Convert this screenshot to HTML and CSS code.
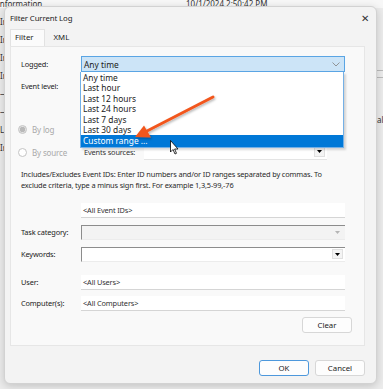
FILE: index.html
```html
<!DOCTYPE html>
<html lang="en">
<head>
    <meta charset="UTF-8">
    <meta name="viewport" content="width=device-width, initial-scale=1.0">
    <title>Filter Current Log</title>
    <link rel="stylesheet" href="styles.css">
</head>
<body>
    <div class="desktop">
        <!-- ventana del visor de eventos, detrás del diálogo -->
        <div class="behind">
            <div class="behind-top">
                <span class="bt-left">Information</span>
                <span class="bt-date">10/1/2024 2:50:42 PM</span>
            </div>
            <div class="behind-left">
                <span>In</span><span>In</span><span>In</span><span>In</span><span>—</span><span>—</span><span>Li</span><span>Ir</span>
            </div>
            <div class="behind-right">
                <span class="br-line"></span>
                <span class="br-line"></span>
                <span class="br-text">al</span>
            </div>
        </div>

        <div class="dialog">
            <div class="titlebar">
                <span class="title">Filter Current Log</span>
                <span class="close">&#x2715;</span>
            </div>

            <div class="tabs">
                <span class="tab active">Filter</span>
                <span class="tab">XML</span>
            </div>

            <div class="panel">
                <div class="row">
                    <label class="label">Logged:</label>
                    <div class="combo open">
                        <span>Any time</span>
                        <svg class="chev" width="8" height="5" viewBox="0 0 8 5"><path d="M0.5 0.5 L4 4 L7.5 0.5" fill="none" stroke="#8a8a8a" stroke-width="0.9"/></svg>
                    </div>
                </div>
                <div class="row level">
                    <label class="label">Event level:</label>
                </div>

                <div class="row radio-row log-row">
                    <span class="radio checked"></span>
                    <span class="radio-text">By log</span>
                </div>
                <div class="row radio-row source-row">
                    <span class="radio"></span>
                    <span class="radio-text">By source</span>
                    <span class="src-label">Events sources:</span>
                    <div class="src-field">
                        <span class="drop-btn"><svg width="5" height="3" viewBox="0 0 5 3"><path d="M0 0 H5 L2.5 3 Z" fill="#000"/></svg></span>
                    </div>
                </div>

                <p class="help">Includes/Excludes Event IDs: Enter ID numbers and/or ID ranges separated by commas. To exclude criteria, type a minus sign first. For example 1,3,5-99,-76</p>

                <div class="row ids-row">
                    <span class="label"></span>
                    <div class="field">&lt;All Event IDs&gt;</div>
                </div>
                <div class="row">
                    <label class="label">Task category:</label>
                    <div class="field sunken disabled">
                        <svg class="small-arrow" width="5" height="3" viewBox="0 0 5 3"><path d="M0 0 H5 L2.5 3 Z" fill="#b5b5b5"/></svg>
                    </div>
                </div>
                <div class="row">
                    <label class="label">Keywords:</label>
                    <div class="field sunken">
                        <span class="drop-btn kw"><svg width="5" height="3" viewBox="0 0 5 3"><path d="M0 0 H5 L2.5 3 Z" fill="#000"/></svg></span>
                    </div>
                </div>
                <div class="row user-row">
                    <label class="label">User:</label>
                    <div class="field">&lt;All Users&gt;</div>
                </div>
                <div class="row">
                    <label class="label">Computer(s):</label>
                    <div class="field">&lt;All Computers&gt;</div>
                </div>
                <div class="clear-row">
                    <button class="btn">Clear</button>
                </div>

                <!-- lista desplegable abierta -->
                <ul class="dropdown">
                    <li>Any time</li>
                    <li>Last hour</li>
                    <li>Last 12 hours</li>
                    <li>Last 24 hours</li>
                    <li>Last 7 days</li>
                    <li>Last 30 days</li>
                    <li class="selected">Custom range ...</li>
                </ul>
            </div>

            <div class="footer">
                <button class="btn primary">OK</button>
                <button class="btn">Cancel</button>
            </div>
        </div>

        <!-- flecha naranja y cursor -->
        <svg class="annotation" width="383" height="389" viewBox="0 0 383 389">
            <defs>
                <filter id="sh" x="-20%" y="-20%" width="140%" height="140%">
                    <feDropShadow dx="1" dy="1.5" stdDeviation="1" flood-color="#000" flood-opacity="0.3"/>
                </filter>
            </defs>
            <g filter="url(#sh)">
                <line x1="213" y1="97" x2="147" y2="131" stroke="#f2561d" stroke-width="3" stroke-linecap="round"/>
                <path d="M135 137 L144 125.5 L151 137.5 Z" fill="#f2561d"/>
            </g>
            <path d="M170.5 140.5 L170.5 152 L173 149.5 L175 154 L176.5 153.3 L174.6 149 L178 149 Z" fill="#fff" stroke="#000" stroke-width="0.8" stroke-linejoin="round"/>
        </svg>
    </div>
</body>
</html>
```

FILE: styles.css
```css
body {
    margin: 0;
    font-family: "Noto Sans", "Open Sans", sans-serif;
    background-color: #e9e9e9;
    color: #1b1b1b;
}
.desktop {
    position: relative;
    width: 383px;
    height: 389px;
    overflow: hidden;
    background-color: #ececec;
}
.behind {
    position: absolute;
    inset: 0;
    font-size: 8px;
    color: #333;
}
.behind-top {
    height: 8px;
    background: #f7f7f7;
    display: flex;
    align-items: flex-end;
    overflow: hidden;
    line-height: 8px;
}
.bt-left {
    margin-left: -3px;
    width: 189px;
}
.behind-left {
    position: absolute;
    left: 0;
    top: 18px;
    width: 5px;
    display: flex;
    flex-direction: column;
    gap: 10px;
    overflow: hidden;
    line-height: 1;
}
.behind-right {
    position: absolute;
    right: 0;
    top: 70px;
    width: 6px;
    display: flex;
    flex-direction: column;
}
.br-line {
    height: 1px;
    background: #bbb;
    margin-bottom: 6px;
}
.br-text {
    margin-top: 30px;
    font-size: 8px;
}
.dialog {
    position: absolute;
    left: 4px;
    top: 6px;
    width: 373px;
    height: 378px;
    box-sizing: border-box;
    background: #f3f3f3;
    border: 1px solid #d2d2d2;
    border-radius: 6px;
    box-shadow: 0 2px 8px rgba(0, 0, 0, 0.18);
    display: flex;
    flex-direction: column;
}
.titlebar {
    height: 22px;
    display: flex;
    align-items: center;
    justify-content: space-between;
    padding: 0 7px 0 5px;
    font-size: 7.8px;
    letter-spacing: -0.1px;
}
.close {
    font-size: 10px;
    color: #333;
}
.tabs {
    display: flex;
    padding-left: 5px;
    height: 17px;
    align-items: flex-end;
}
.tab {
    font-size: 7.8px;
    padding: 0 8px 0 9px;
    height: 16px;
    line-height: 15px;
}
.tab.active {
    background: #fbfbfb;
    border: 1px solid #e2e2e2;
    border-bottom: none;
    padding: 0 10px 0 4px;
}
.panel {
    position: relative;
    margin: 0 11px 0 5px;
    height: 300px;
    box-sizing: border-box;
    background: #f9f9f9;
    border: 1px solid #e6e6e6;
    padding: 9px 0 0 10px;
    font-size: 7.4px;
    letter-spacing: -0.15px;
}
.row {
    display: flex;
    align-items: center;
    height: 16px;
    margin-bottom: 6px;
}
.label {
    width: 60px;
    flex: none;
}
.combo {
    width: 264px;
    height: 16px;
    box-sizing: border-box;
    display: flex;
    align-items: center;
    justify-content: space-between;
    padding: 0 4px 0 2px;
    font-size: 8.4px;
    letter-spacing: 0;
}
.combo.open {
    background: #cce4f7;
    border: 1px solid #5aa5e4;
}
.level {
    margin-bottom: 28px;
}
.radio-row {
    position: relative;
    height: 14px;
    margin-bottom: 9px;
}
.radio {
    width: 7px;
    height: 7px;
    border: 1px solid #c4c4c4;
    border-radius: 50%;
    background: #fff;
    margin-left: -3px;
    margin-right: 5px;
    box-sizing: content-box;
    flex: none;
}
.radio.checked {
    background: radial-gradient(circle, #b9b9b9 0 2.5px, #e3e3e3 3px);
}
.radio-text {
    color: #a9a9a9;
    font-size: 8px;
    width: 52px;
}
.src-label {
    width: 60px;
    color: #333;
}
.src-field {
    width: 183px;
    height: 14px;
    background: #fff;
    border-bottom: 1px solid #e4e4e4;
    display: flex;
    justify-content: flex-end;
    align-items: center;
}
.drop-btn {
    width: 9px;
    height: 8px;
    display: flex;
    align-items: center;
    justify-content: center;
    background: #f4f4f4;
    border: 1px solid #e0e0e0;
    margin-right: 2px;
}
.help {
    margin: 10px 0 0;
    width: 326px;
    line-height: 11px;
    height: 33px;
    color: #2a2a2a;
}
.field {
    width: 264px;
    height: 15px;
    box-sizing: border-box;
    background: #fff;
    border-bottom: 1px solid #d5d5d5;
    padding-left: 2px;
    line-height: 14px;
    color: #333;
    display: flex;
    align-items: center;
    justify-content: space-between;
}
.field.sunken {
    border-top: 1px solid #8c8c8c;
    border-left: 1px solid #8c8c8c;
    border-bottom: 1px solid #ececec;
}
.field.disabled {
    background: #f3f3f3;
}
.small-arrow {
    margin-left: auto;
    margin-right: 5px;
}
.drop-btn.kw {
    margin-left: auto;
}
.user-row {
    margin-top: 12px;
    margin-bottom: 5px;
}
.clear-row {
    display: flex;
    justify-content: flex-end;
    width: 331px;
    margin-top: 3px;
}
.btn {
    width: 50px;
    height: 16px;
    padding: 0;
    font-family: inherit;
    font-size: 7.8px;
    background: #fdfdfd;
    border: 1px solid #d7d7d7;
    border-radius: 3px;
    color: #1b1b1b;
}
.btn.primary {
    border-color: #4d98dc;
}
.dropdown {
    position: absolute;
    left: 69px;
    top: 25px;
    width: 264px;
    margin: 0;
    padding: 0;
    list-style: none;
    background: #fff;
    border: 1px solid #74b0e6;
    border-top: none;
    box-sizing: border-box;
    box-shadow: 2px 2px 2px rgba(0, 0, 0, 0.15);
    font-size: 8.4px;
    letter-spacing: 0;
    padding-top: 1px;
}
.dropdown li {
    height: 10.4px;
    line-height: 10.4px;
    padding-left: 2px;
}
.dropdown li.selected {
    background: #0078d7;
    color: #fff;
    height: 12px;
    line-height: 11px;
}
.footer {
    display: flex;
    justify-content: flex-end;
    gap: 6px;
    padding: 14px 11px 0 0;
}
.annotation {
    position: absolute;
    left: 0;
    top: 0;
    pointer-events: none;
}
```
